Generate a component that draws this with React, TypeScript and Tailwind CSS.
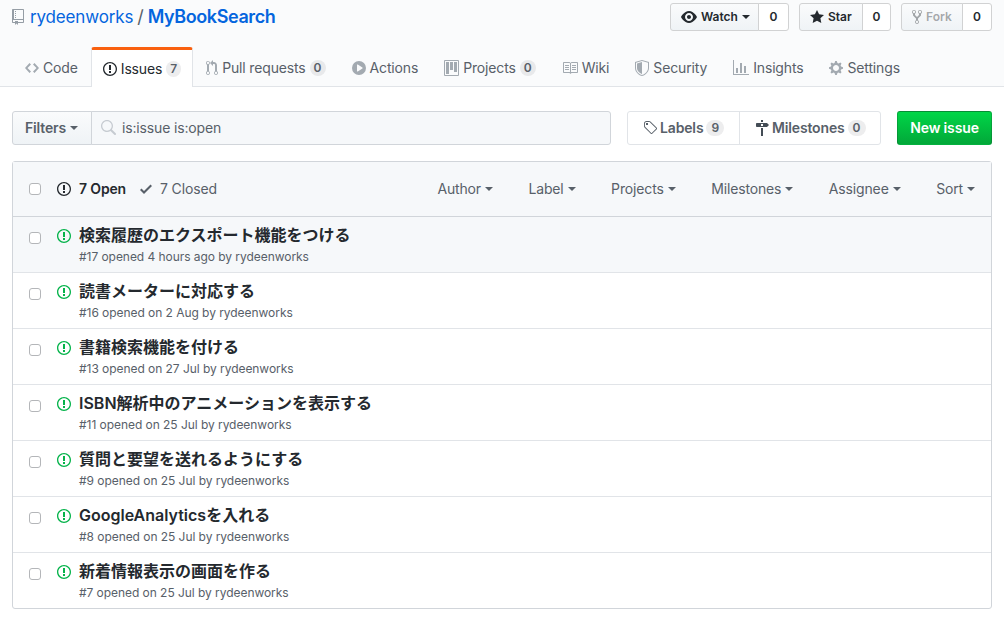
const paths = {
  repo: 'M4 9H3V8h1v1zm0-3H3v1h1V6zm0-2H3v1h1V4zm0-2H3v1h1V2zm8-1v12c0 .55-.45 1-1 1H6v2l-1.5-1.5L3 16v-2H1c-.55 0-1-.45-1-1V1c0-.55.45-1 1-1h10c.55 0 1 .45 1 1zm-1 10H1v2h2v-1h3v1h5v-2zm0-10H2v9h9V1z',
  code: 'M9.5 3L8 4.5 11.5 8 8 11.5 9.5 13 14 8 9.5 3zm-5 0L0 8l4.5 5L6 11.5 2.5 8 6 4.5 4.5 3z',
  issue: 'M7 2.3c3.14 0 5.7 2.56 5.7 5.7s-2.56 5.7-5.7 5.7A5.71 5.71 0 0 1 1.3 8c0-3.14 2.56-5.7 5.7-5.7zM7 1C3.14 1 0 4.14 0 8s3.14 7 7 7 7-3.14 7-7-3.14-7-7-7zm1 3H6v5h2V4zm0 6H6v2h2v-2z',
  pull: 'M11 11.28V5c-.03-.78-.34-1.47-.94-2.06C9.46 2.35 8.78 2.03 8 2H7V0L4 3l3 3V4h1c.27.02.48.11.69.31.21.2.3.42.31.69v6.28A1.993 1.993 0 0 0 10 15a1.993 1.993 0 0 0 1-3.72zm-1 2.92c-.66 0-1.2-.55-1.2-1.2 0-.65.55-1.2 1.2-1.2.65 0 1.2.55 1.2 1.2 0 .65-.55 1.2-1.2 1.2zM4 3c0-1.11-.89-2-2-2a1.993 1.993 0 0 0-1 3.72v6.56A1.993 1.993 0 0 0 2 15a1.993 1.993 0 0 0 1-3.72V4.72c.59-.34 1-.98 1-1.72zm-.8 10c0 .66-.55 1.2-1.2 1.2-.65 0-1.2-.55-1.2-1.2 0-.65.55-1.2 1.2-1.2.65 0 1.2.55 1.2 1.2zM2 4.2C1.34 4.2.8 3.65.8 3c0-.65.55-1.2 1.2-1.2.65 0 1.2.55 1.2 1.2 0 .65-.55 1.2-1.2 1.2z',
  play: 'M14 8A7 7 0 1 1 0 8a7 7 0 0 1 14 0zm-8.223 3.482l4.599-3.066a.5.5 0 0 0 0-.832L5.777 4.518A.5.5 0 0 0 5 4.934v6.132a.5.5 0 0 0 .777.416z',
  project: 'M10 12h3V2h-3v10zm-4-2h3V2H6v8zm-4 4h3V2H2v12zm-1 1h13V1H1v14zM14 0H1a1 1 0 0 0-1 1v14a1 1 0 0 0 1 1h13a1 1 0 0 0 1-1V1a1 1 0 0 0-1-1z',
  book: 'M3 5h4v1H3V5zm0 3h4V7H3v1zm0 2h4V9H3v1zm11-5h-4v1h4V5zm0 2h-4v1h4V7zm0 2h-4v1h4V9zm2-6v9c0 .55-.45 1-1 1H9.5l-1 1-1-1H2c-.55 0-1-.45-1-1V3c0-.55.45-1 1-1h5.5l1 1 1-1H15c.55 0 1 .45 1 1zm-8 .5L7.5 3H2v9h6V3.5zm7-.5H9.5l-.5.5V12h6V3z',
  shield: 'M7 0L0 2v6.02C0 12.69 5.31 16 7 16c1.69 0 7-3.31 7-7.98V2L7 0zm0 1.04l6 1.71v5.27C13 12.03 8.69 15 7 15c-1.69 0-6-2.97-6-6.98V2.75l6-1.71zM7 2L2 3.43v4.6C2 11.2 5.5 13.7 7 14V2z',
  graph: 'M16 14v1H0V0h1v14h15zM5 13H3V8h2v5zm4 0H7V3h2v10zm4 0h-2V6h2v7z',
  gear: 'M14 8.77v-1.6l-1.94-.64-.45-1.09.88-1.84-1.13-1.13-1.81.91-1.09-.45-.69-1.92h-1.6l-.63 1.94-1.11.45-1.84-.88-1.13 1.13.91 1.81-.45 1.09L0 7.23v1.59l1.94.64.45 1.09-.88 1.84 1.13 1.13 1.81-.91 1.09.45.69 1.92h1.59l.63-1.94 1.11-.45 1.84.88 1.13-1.13-.92-1.81.47-1.09L14 8.75v.02zM7 11c-1.66 0-3-1.34-3-3s1.34-3 3-3 3 1.34 3 3-1.34 3-3 3z',
  eye: 'M8.06 2C3 2 0 8 0 8s3 6 8.06 6C13 14 16 8 16 8s-3-6-7.94-6zM8 12c-2.2 0-4-1.78-4-4 0-2.2 1.8-4 4-4 2.22 0 4 1.8 4 4 0 2.22-1.78 4-4 4zm2-4c0 1.11-.89 2-2 2-1.11 0-2-.89-2-2 0-1.11.89-2 2-2 1.11 0 2 .89 2 2z',
  star: 'M14 6l-4.9-.64L7 1 4.9 5.36 0 6l3.6 3.26L2.67 14 7 11.67 11.33 14l-.93-4.74L14 6z',
  fork: 'M8 1a1.993 1.993 0 0 0-1 3.72V6L5 8 3 6V4.72A1.993 1.993 0 0 0 2 1a1.993 1.993 0 0 0-1 3.72V6.5l3 3v1.78A1.993 1.993 0 0 0 5 15a1.993 1.993 0 0 0 1-3.72V9.5l3-3V4.72A1.993 1.993 0 0 0 8 1zM2 4.2C1.34 4.2.8 3.65.8 3c0-.65.55-1.2 1.2-1.2.65 0 1.2.55 1.2 1.2 0 .65-.55 1.2-1.2 1.2zm3 10c-.66 0-1.2-.55-1.2-1.2 0-.65.55-1.2 1.2-1.2.65 0 1.2.55 1.2 1.2 0 .65-.55 1.2-1.2 1.2zm3-10c-.66 0-1.2-.55-1.2-1.2 0-.65.55-1.2 1.2-1.2.65 0 1.2.55 1.2 1.2 0 .65-.55 1.2-1.2 1.2z',
  tag: 'M7.73 1.73C7.26 1.26 6.62 1 5.96 1H3.5C2.13 1 1 2.13 1 3.5v2.47c0 .66.27 1.3.73 1.77l6.06 6.06c.39.39 1.02.39 1.41 0l4.59-4.59a.996.996 0 0 0 0-1.41L7.73 1.73zM2.38 7.09c-.31-.3-.47-.7-.47-1.13V3.5c0-.88.72-1.59 1.59-1.59h2.47c.42 0 .83.16 1.13.47l6.14 6.13-4.73 4.73-6.13-6.15zM3.01 3h2v2H3V3h.01z',
  milestone: 'M8 2H6V0h2v2zm4 5H2c-.55 0-1-.45-1-1V4c0-.55.45-1 1-1h10l2 2-2 2zM8 4H6v2h2V4zM6 16h2V8H6v8z',
  check: 'M12 5l-8 8-4-4 1.5-1.5L4 10l6.5-6.5L12 5z',
  search: 'M15.7 13.3l-3.81-3.83A5.93 5.93 0 0 0 13 6c0-3.31-2.69-6-6-6S1 2.69 1 6s2.69 6 6 6c1.3 0 2.48-.41 3.47-1.11l3.83 3.81c.19.2.45.3.7.3.25 0 .52-.09.7-.3a.996.996 0 0 0 0-1.41v.01zM7 10.7c-2.59 0-4.7-2.11-4.7-4.7 0-2.59 2.11-4.7 4.7-4.7 2.59 0 4.7 2.11 4.7 4.7 0 2.59-2.11 4.7-4.7 4.7z',
}

const widths: Record<keyof typeof paths, number> = {
  repo: 12, code: 14, issue: 14, pull: 12, play: 14, project: 15, book: 16, shield: 14,
  graph: 16, gear: 14, eye: 16, star: 14, fork: 10, tag: 14, milestone: 14, check: 12, search: 16,
}

function Octicon({ name, className }: { name: keyof typeof paths; className?: string }) {
  return (
    <svg viewBox={`0 0 ${widths[name]} 16`} width={widths[name]} height={16} className={`shrink-0 fill-current ${className ?? ''}`}>
      <path fillRule="evenodd" d={paths[name]} />
    </svg>
  )
}

function Caret({ className }: { className?: string }) {
  return <span className={`inline-block h-0 w-0 border-x-4 border-t-4 border-x-transparent border-t-current ${className ?? 'ml-1'}`} />
}

function Counter({ value, wide }: { value: number; wide?: boolean }) {
  return (
    <span className={`rounded-full bg-[#1b1f2314] text-xs leading-4 font-semibold tracking-normal text-[#586069] ${wide ? 'px-[5px]' : 'px-1'}`}>{value}</span>
  )
}

const tabs: { label: string; icon: keyof typeof paths; count?: number }[] = [
  { label: 'Code', icon: 'code' },
  { label: 'Issues', icon: 'issue', count: 7 },
  { label: 'Pull requests', icon: 'pull', count: 0 },
  { label: 'Actions', icon: 'play' },
  { label: 'Projects', icon: 'project', count: 0 },
  { label: 'Wiki', icon: 'book' },
  { label: 'Security', icon: 'shield' },
  { label: 'Insights', icon: 'graph' },
  { label: 'Settings', icon: 'gear' },
]

const issues = [
  { title: '検索履歴のエクスポート機能をつける', meta: '#17 opened 4 hours ago by rydeenworks' },
  { title: '読書メーターに対応する', meta: '#16 opened on 2 Aug by rydeenworks' },
  { title: '書籍検索機能を付ける', meta: '#13 opened on 27 Jul by rydeenworks' },
  { title: 'ISBN解析中のアニメーションを表示する', meta: '#11 opened on 25 Jul by rydeenworks' },
  { title: '質問と要望を送れるようにする', meta: '#9 opened on 25 Jul by rydeenworks' },
  { title: 'GoogleAnalyticsを入れる', meta: '#8 opened on 25 Jul by rydeenworks' },
  { title: '新着情報表示の画面を作る', meta: '#7 opened on 25 Jul by rydeenworks' },
]

function Checkbox() {
  return <span className="h-3 w-3 shrink-0 rounded-[3px] border border-[#b4b6b9] bg-white" />
}

function RepoAction({ icon, label, count, btnClass, countClass, caret, disabled }: { icon: keyof typeof paths; label: string; count: number; btnClass: string; countClass: string; caret?: boolean; disabled?: boolean }) {
  return (
    <div className="flex h-[28px] text-xs leading-5 font-semibold tracking-normal">
      <div className={`flex items-center gap-1 rounded-l-[3px] border border-[#d1d2d3] bg-linear-to-b from-[#fafbfc] to-[#eff3f6] pl-2.5 ${btnClass} ${disabled ? 'text-[#24292e66]' : 'text-[#24292e]'}`}>
        <Octicon name={icon} />
        <span>{label}</span>
        {caret && <Caret className="ml-0" />}
      </div>
      <div className={`-ml-px flex items-center justify-center rounded-r-[3px] border border-[#d1d2d3] bg-white text-[#24292e] ${countClass}`}>{count}</div>
    </div>
  )
}

export default function App() {
  return (
    <div className="min-h-[619px] bg-white font-['Inter','Noto_Sans_CJK_JP',sans-serif] text-sm tracking-[-0.15px] text-[#24292e]">
      {/* Repo header */}
      <div className="border-b border-[#e1e4e8] bg-[#fafbfc] pt-[3px]">
        <div className="flex h-[44px] items-start justify-between px-3">
          <h1 className="flex h-[28px] items-center font-normal">
            <Octicon name="repo" className="mr-1.5 text-[#959da5]" />
            <span className="text-[17px] text-[#0465de]">rydeenworks</span>
            <span className="mx-1 text-lg text-[#586069]">/</span>
            <span className="text-lg font-semibold tracking-[-0.4px] text-[#0465de]">MyBookSearch</span>
          </h1>
          <div className="flex gap-2.5">
            <RepoAction icon="eye" label="Watch" count={0} caret btnClass="w-[89px]" countClass="w-[31px]" />
            <RepoAction icon="star" label="Star" count={0} btnClass="w-[64px]" countClass="w-[29px]" />
            <RepoAction icon="fork" label="Fork" count={0} btnClass="w-[62px]" countClass="w-[30px]" disabled />
          </div>
        </div>
        <nav className="flex h-[39px] px-3">
          {tabs.map((tab) => {
            const active = tab.label === 'Issues'
            return (
              <div
                key={tab.label}
                className={
                  active
                    ? 'z-10 flex h-[40px] items-center gap-1 rounded-t-[3px] border-x border-t-[3px] border-x-[#e1e4e8] border-t-[#f9600f] bg-white px-[11px] text-[#24292e]'
                    : 'flex items-center gap-1 px-[13px] pt-[3px] text-[#586069]'
                }
              >
                <Octicon name={tab.icon} className={active ? '' : 'text-[#a3aab1]'} />
                <span>{tab.label}</span>
                {tab.count !== undefined && <Counter value={tab.count} />}
              </div>
            )
          })}
        </nav>
      </div>

      {/* Filters */}
      <div className="flex gap-4 px-3 pt-6">
        <div className="flex h-[34px] flex-1">
          <div className="flex w-[80px] items-center rounded-l-[3px] border border-[#d1d5da] bg-linear-to-b from-[#fafbfc] to-[#eff3f6] pl-3 font-semibold text-[#586069]">
            Filters
            <Caret />
          </div>
          <div className="-ml-px flex flex-1 items-center gap-[6px] rounded-r-[3px] border border-[#d1d5da] bg-[#f6f8fa] pl-2 text-[#586069]">
            <Octicon name="search" className="text-[#c6cbd1]" />
            <span>is:issue is:open</span>
          </div>
        </div>
        <div className="flex h-[34px] w-[254px] rounded-[3px] border border-[#e1e4e8] font-semibold text-[#586069]">
          <div className="flex w-[112px] items-center gap-[3px] border-r border-[#e1e4e8] pl-[15px]">
            <Octicon name="tag" className="text-[#586069]" />
            <span>Labels</span>
            <Counter value={9} wide />
          </div>
          <div className="flex items-center gap-[3px] pl-[15px]">
            <Octicon name="milestone" className="text-[#444d56]" />
            <span>Milestones</span>
            <Counter value={0} wide />
          </div>
        </div>
        <div className="flex h-[34px] w-[95px] items-center justify-center rounded-[3px] border border-[#1b1f2333] bg-linear-to-b from-[#00d647] to-[#02a839] font-semibold text-white">
          New issue
        </div>
      </div>

      {/* Issue list */}
      <div className="mx-3 mt-4 rounded-[3px] border border-[#d1d5da]">
        <div className="flex h-[54px] items-center bg-[#f6f8fa] px-4 text-[#586069]">
          <Checkbox />
          <Octicon name="issue" className="ml-4 text-[#24292e]" />
          <span className="ml-2 font-semibold text-[#24292e]">7 Open</span>
          <Octicon name="check" className="ml-[14px] text-[#586069]" />
          <span className="ml-2">7 Closed</span>
          <div className="ml-auto flex gap-[35.5px]">
            {['Author', 'Label', 'Projects', 'Milestones', 'Assignee', 'Sort'].map((f) => (
              <span key={f} className="flex items-center">
                {f}
                <Caret />
              </span>
            ))}
          </div>
        </div>
        {issues.map((issue, i) => (
          <div key={issue.meta} className={`flex h-[56px] border-t border-[#e1e4e8] pl-4 ${i === 0 ? 'border-t-[#d1d5da] bg-[#f6f8fa]' : ''}`}>
            <div className="mt-[15px] flex items-start">
              <Checkbox />
            </div>
            <Octicon name="issue" className="ml-4 mt-[11px] text-[#04b34a]" />
            <div className="ml-2 pt-[6px]">
              <div className="text-base leading-6 font-semibold tracking-normal text-[#24292e]">{issue.title}</div>
              <div className="mt-px text-xs leading-[18px] tracking-[-0.05px] text-[#586069]">{issue.meta}</div>
            </div>
          </div>
        ))}
      </div>
    </div>
  )
}
